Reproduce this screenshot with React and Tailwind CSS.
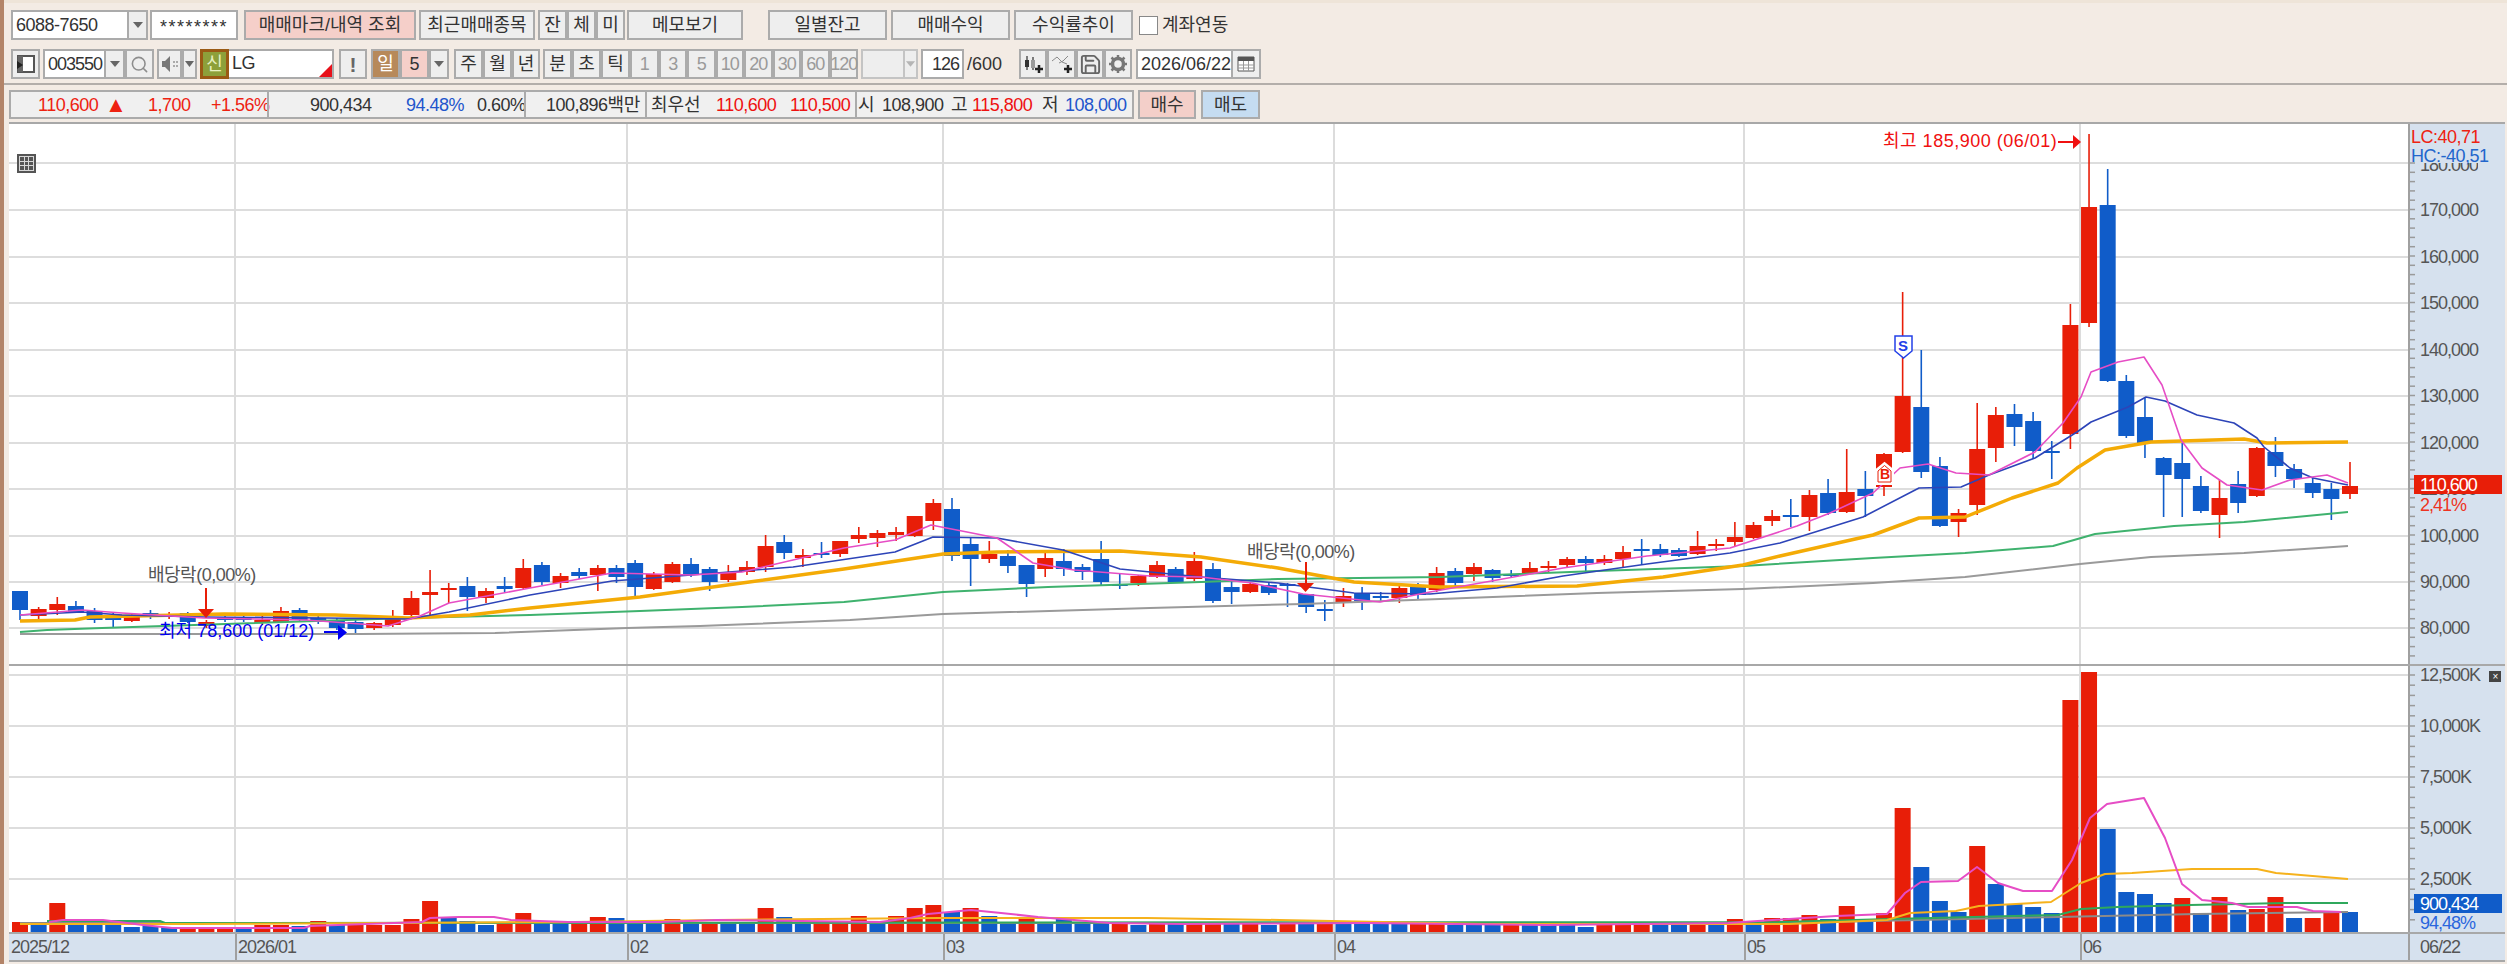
import { Search, Save } from 'lucide-react'

const RED = '#e81e08'
const BLUE = '#105cc9'

// [color, wick top, body top, body bottom, wick bottom] in page pixels
const candles = [
  ['b',591,591,610,620],['r',607,609,616,619],['r',597,604,610,615],['b',601,606,612,613],['b',608,611,620,623],
  ['b',613,616,620,627],['r',613,615,621,622],['b',610,613,617,619],['r',612,614,617,619],['b',612,613,622,623],
  ['r',620,622,626,628],['b',615,617,620,622],['b',616,618,620,622],['r',615,620,623,625],['r',607,611,622,623],
  ['b',608,610,620,622],['b',616,618,622,624],['b',618,620,628,630],['b',620,622,629,635],['r',622,623,628,630],
  ['r',610,617,625,627],['r',591,598,615,617],['r',570,592,595,617],['r',583,588,590,603],['b',577,586,597,611],
  ['r',588,591,598,603],['b',577,586,589,592],['r',559,568,588,589],['b',562,565,582,585],['r',573,576,583,588],
  ['b',568,572,576,579],['r',565,568,575,591],['b',565,568,577,583],['b',560,563,587,597],['r',572,574,589,590],
  ['r',562,564,582,583],['b',558,564,575,577],['b',567,569,582,591],['r',565,573,580,582],['r',561,567,572,575],
  ['r',535,546,567,572],['b',535,542,553,559],['r',549,555,558,567],['b',542,553,555,558],['r',541,541,554,557],
  ['r',527,535,539,543],['r',530,533,538,547],['r',527,532,535,541],['r',516,516,536,537],['r',499,503,521,530],
  ['b',498,509,556,561],['b',537,544,559,586],['r',541,554,559,563],['b',550,556,566,573],['b',565,565,584,597],
  ['r',553,558,569,577],['b',549,561,569,576],['b',564,567,572,580],['b',541,559,582,585],['b',574,584,586,589],
  ['r',575,576,583,586],['r',561,565,577,578],['b',567,569,582,583],['r',552,561,579,581],['b',563,569,601,603],
  ['b',580,587,592,604],['r',582,584,592,593],['b',583,585,593,595],['b',583,584,586,607],['b',594,594,607,613],
  ['b',600,609,610,621],['r',588,596,602,607],['b',587,593,601,610],['b',592,596,598,602],['r',583,588,598,603],
  ['b',583,585,595,600],['r',567,573,590,592],['b',568,571,583,586],['r',563,567,574,581],['b',569,570,578,582],
  ['b',570,574,575,578],['r',562,568,573,574],['r',561,566,567,572],['r',557,559,565,567],['b',556,559,563,572],
  ['r',555,559,563,565],['r',546,552,559,568],['b',539,549,551,564],['b',544,549,555,557],['b',548,550,556,557],
  ['r',531,546,554,555],['r',539,544,545,551],['r',522,537,542,547],['r',522,525,538,539],['r',510,516,521,526],
  ['b',499,515,517,527],['r',490,495,517,531],['b',479,493,513,515],['r',449,492,512,513],['b',471,489,496,517],
  ['r',453,454,487,496],['r',292,396,452,453],['b',350,407,472,478],['b',457,466,526,527],['r',509,513,522,537],
  ['r',403,449,505,515],['r',407,415,448,462],['b',404,414,427,446],['b',412,421,451,459],['b',441,451,453,479],
  ['r',304,325,434,449],['r',134,207,323,327],['b',169,205,381,382],['b',375,381,436,438],['b',397,417,443,458],
  ['b',457,458,475,517],['b',443,463,479,517],['b',476,486,511,513],['r',480,498,515,538],['b',471,484,503,513],
  ['r',447,448,496,497],['b',437,452,466,477],['b',464,469,479,488],['b',477,483,493,498],['b',483,489,499,520],
  ['r',462,486,494,499],
]

const volumes = [
  'r922','b925','r903','b922','b925','b925','b927','b926','b927','r927','r927','r927','b927','r925','r925','b926',
  'r921','b925','r925','r925','r925','r919','r901','b918','b921','b925','r923','r913','b922','b923','r923','r917',
  'b918','b923','b923','r919','b923','r923','b923','b923','r908','b917','b922','r923','r923','r916','b923','r916',
  'r908','r905','b912','r908','b916','b922','r917','b922','b919','b922','b923','r922','b925','r923','b924','r922',
  'r922','b922','r922','b925','r922','b923','r922','b922','b922','b924','b924','r924','r922','b925','b925','b925',
  'r922','b925','b925','b925','b927','r925','r925','r925','b925','b925','r922','b925','r919','b925','r918','r918',
  'r915','b919','r906','b919','r913','r808','b867','b901','b912','r846','b884','b904','b907','b913','r700','r672',
  'b829','b892','b894','b903','r898','b913','r897','b910','r909','r897','b918','r918','r912','b912',
]

const priceLines = [
  { color: '#9a9a9a', width: 2, d: '20,634 360,634 495,633 627,628 700,626 850,620 943,614 1150,608 1303,604 1440,599 1597,593 1743,589 1873,583 1965,577 2080,564 2151,557 2244,553 2348,546' },
  { color: '#3fb26e', width: 2, d: '20,632 47,630 102,628 347,620 408,618 530,615 640,611 742,607 844,602 943,592 1048,587 1201,582 1278,579 1440,577 1597,571 1743,566 1873,558 1965,553 2053,546 2095,534 2174,526 2244,522 2348,512' },
  { color: '#f4ab06', width: 3.5, d: '20,621 75,620 90,617 224,614 335,615 408,618 470,615 530,608 640,597 742,583 844,569 943,554 997,552 1120,551 1201,557 1278,568 1354,582 1440,587 1577,586 1663,577 1743,565 1780,556 1873,535 1919,518 1965,517 2012,498 2058,483 2077,468 2105,450 2151,442 2244,439 2267,443 2348,442' },
  { color: '#2d44b8', width: 1.6, d: '20,615 82,612 122,615 204,617 326,618 408,619 449,612 530,595 612,581 691,575 793,567 895,552 933,537 997,538 1063,550 1120,569 1201,577 1278,583 1354,593 1430,594 1497,588 1563,576 1647,564 1730,553 1780,543 1863,517 1919,488 1961,487 1989,475 2035,458 2077,432 2091,422 2128,407 2146,397 2165,401 2197,415 2234,423 2257,438 2264,447 2290,468 2313,478 2348,485' },
  { color: '#e64dc5', width: 1.6, d: '20,615 82,610 122,613 204,618 306,620 388,626 420,616 449,603 530,588 612,573 691,575 742,572 793,560 844,548 895,540 931,525 967,532 997,538 1033,563 1074,570 1150,576 1201,577 1252,583 1303,594 1380,602 1430,592 1497,580 1563,568 1647,556 1730,548 1797,526 1830,513 1873,493 1900,468 1928,464 1956,473 1989,475 2035,452 2063,423 2081,397 2091,372 2118,362 2144,357 2162,385 2181,440 2202,468 2227,485 2262,490 2290,480 2327,475 2348,483' },
]

const volumeLines = [
  { color: '#8a8a8a', width: 2, d: '20,923 1780,923 2058,917 2197,914 2348,912' },
  { color: '#2fa85c', width: 2, d: '47,921 160,921 165,923 1780,922 1891,919 2058,915 2081,909 2118,907 2190,905 2285,903 2348,903' },
  { color: '#f6b21c', width: 2, d: '20,924 195,924 574,922 717,920 940,918 1147,918 1280,920 1486,924 1789,924 1887,920 1910,913 1956,911 1979,906 2051,902 2081,883 2105,874 2132,873 2192,869 2257,869 2276,873 2348,879' },
  { color: '#e64dc5', width: 2, d: '49,922 63,920 103,920 143,925 172,928 304,928 310,926 422,922 430,918 459,917 494,917 511,920 568,922 660,922 717,920 880,922 910,918 928,914 971,910 1001,913 1038,917 1110,923 1183,924 1365,923 1547,925 1728,923 1789,919 1836,916 1887,914 1905,893 1921,882 1958,881 1977,867 1998,883 2023,891 2052,891 2072,860 2090,818 2107,804 2144,798 2165,838 2182,884 2202,900 2232,903 2248,907 2297,907 2313,911 2341,912' },
]

const monthX = [235, 627, 943, 1334, 1744, 2080]
const priceGrid = [163, 210, 257, 303, 350, 396, 443, 489, 536, 582, 628]
const volumeGrid = [675, 726, 777, 828, 879]
const priceLabels = [
  ['170,000', 210], ['160,000', 257], ['150,000', 303], ['140,000', 350], ['130,000', 396], ['120,000', 443],
  ['110,000', 489], ['100,000', 536], ['90,000', 582], ['80,000', 628],
]
const volumeLabels = [['12,500K', 675], ['10,000K', 726], ['7,500K', 777], ['5,000K', 828], ['2,500K', 879]]
const barX = (i) => 20 + i * 18.64

function Btn({ className = '', children }) {
  return (
    <button className={`flex h-full shrink-0 items-center justify-center border-2 border-[#ababab] bg-[#eeeeee] tracking-normal ${className}`}>
      {children}
    </button>
  )
}

function Arrow({ disabled }) {
  return (
    <svg width="12" height="8" viewBox="0 0 12 8">
      <path d="M1 1h10L6 7z" fill={disabled ? '#b5b5b5' : '#666'} />
    </svg>
  )
}

function PriceChart() {
  return (
    <svg className="block h-[540px] w-full" viewBox="9 124 2399 540" preserveAspectRatio="none">
      {priceGrid.map((y) => <line key={y} x1="9" x2="2408" y1={y} y2={y} stroke="#dddddd" strokeWidth="2" />)}
      {monthX.map((x) => <line key={x} x1={x} x2={x} y1="124" y2="664" stroke="#dcdcdc" strokeWidth="2" />)}
      {candles.map(([c, wt, bt, bb, wb], i) => {
        const color = c === 'r' ? RED : BLUE
        const x = barX(i)
        return (
          <g key={i}>
            <line x1={x} x2={x} y1={wt} y2={wb} stroke={color} strokeWidth="1.6" />
            <rect x={x - 8} y={bt} width="16" height={Math.max(bb - bt, 2)} fill={color} />
          </g>
        )
      })}
      {priceLines.map((l) => <polyline key={l.color} points={l.d} fill="none" stroke={l.color} strokeWidth={l.width} strokeLinejoin="round" />)}
      <path d="M206 588v22" stroke={RED} strokeWidth="2" />
      <path d="M198 609h16l-8 9z" fill={RED} />
      <path d="M1306 562v22" stroke={RED} strokeWidth="2" />
      <path d="M1297 583h17l-8.500 9z" fill={RED} />
      <path d="M324 632h16" stroke="#0000f0" strokeWidth="2" />
      <path d="M338 625l9 7.500-9 7.500z" fill="#0000f0" />
      <path d="M2058 142h16" stroke="#f01010" strokeWidth="2" />
      <path d="M2073 135l8 7-8 7z" fill="#f01010" />
      <path d="M1895 336h17v15l-8.500 7-8.500-7z" fill="#fff" stroke="#2340e8" strokeWidth="1.500" />
      <path d="M1876 484v-14l8.500-7 8.500 7v14z" fill="#fff" stroke="#fff" strokeWidth="2" />
      <path d="M1878 482v-11l6.500-5.500 6.500 5.500v11z" fill="#fff" stroke={RED} strokeWidth="1" />
    </svg>
  )
}

function VolumeChart() {
  return (
    <svg className="block h-[266px] w-full" viewBox="9 666 2399 266" preserveAspectRatio="none">
      {volumeGrid.map((y) => <line key={y} x1="9" x2="2408" y1={y} y2={y} stroke="#dddddd" strokeWidth="2" />)}
      {monthX.map((x) => <line key={x} x1={x} x2={x} y1="666" y2="932" stroke="#dcdcdc" strokeWidth="2" />)}
      {volumes.map((v, i) => {
        const top = Number(v.slice(1))
        return <rect key={i} x={barX(i) - 8} y={top} width="16" height={932 - top} fill={v[0] === 'r' ? RED : BLUE} />
      })}
      {volumeLines.map((l) => <polyline key={l.color} points={l.d} fill="none" stroke={l.color} strokeWidth={l.width} strokeLinejoin="round" />)}
    </svg>
  )
}

function AxisTicks({ from, to, step }) {
  const ticks = []
  for (let y = from; y < to; y += step) ticks.push(y)
  return (
    <svg className="absolute inset-0 h-full w-[10px]">
      {ticks.map((y) => <line key={y} x1="0" x2="5" y1={y} y2={y} stroke="#9a9a9a" strokeWidth="1.500" />)}
    </svg>
  )
}

export default function App() {
  return (
    <div className="flex h-[964px] w-[2507px] overflow-hidden bg-[#f3ebe4] font-['Liberation_Sans','Noto_Sans_CJK_KR',sans-serif] text-[18px] leading-none tracking-[-0.5px] text-[#333]">
      <div className="w-[4px] shrink-0 bg-[#b38468]" />
      <div className="flex min-w-0 flex-1 flex-col">
        <div className="h-[3px] shrink-0 bg-[#eee4d8]" />

        <div className="ml-[7px] mt-[7px] flex h-[30px] shrink-0 items-stretch">
          <div className="flex w-[116px] items-center border-2 border-r-0 border-[#ababab] bg-white pl-[3px]">6088-7650</div>
          <Btn className="w-[21px]"><Arrow /></Btn>
          <div className="ml-[2px] flex w-[88px] items-center justify-center border-2 border-[#ababab] bg-white pt-[3px] text-[18px] tracking-[1.5px]">********</div>
          <Btn className="ml-[6px] w-[172px] !bg-[#f5cfc9]">매매마크/내역 조회</Btn>
          <Btn className="ml-[3px] w-[116px]">최근매매종목</Btn>
          <Btn className="ml-[3px] w-[29px]">잔</Btn>
          <Btn className="w-[29px]">체</Btn>
          <Btn className="w-[29px]">미</Btn>
          <Btn className="ml-[2px] w-[116px]">메모보기</Btn>
          <Btn className="ml-[25px] w-[119px]">일별잔고</Btn>
          <Btn className="ml-[4px] w-[119px]">매매수익</Btn>
          <Btn className="ml-[4px] w-[119px]">수익률추이</Btn>
          <div className="ml-[6px] h-[19px] w-[19px] self-center border border-[#888] bg-white" />
          <span className="ml-[4px] self-center tracking-normal">계좌연동</span>
        </div>

        <div className="ml-[7px] mt-[9px] flex h-[30px] shrink-0 items-stretch">
          <Btn className="w-[29px]">
            <svg width="20" height="20" viewBox="0 0 20 20">
              <path d="M2 2h16v16H2z" fill="#fff" stroke="#555" strokeWidth="2" />
              <path d="M2 2h5v16H2z" fill="#666" />
              <path d="M1 7l6 4-6 4z" fill="#222" />
            </svg>
          </Btn>
          <div className="ml-[3px] flex w-[61px] items-center border-2 border-r-0 border-[#ababab] bg-white pl-[3px] tracking-[-1px]">003550</div>
          <Btn className="w-[21px]"><Arrow /></Btn>
          <Btn className="w-[29px]"><Search size={19} color="#8d8d8d" strokeWidth={2} /></Btn>
          <Btn className="ml-[3px] w-[25px]">
            <svg width="18" height="18" viewBox="0 0 18 18">
              <path d="M1 6h3l5-5v16l-5-5H1z" fill="#777" />
              <path d="M12 6h2v2h-2zM15 6h2v2h-2zM12 10h2v2h-2zM15 10h2v2h-2z" fill="#aaa" />
            </svg>
          </Btn>
          <Btn className="w-[15px]">
            <svg width="9" height="6" viewBox="0 0 9 6"><path d="M0 0h9L4.500 6z" fill="#666" /></svg>
          </Btn>
          <div className="ml-[3px] flex w-[29px] items-center justify-center border-[3px] border-[#9a5a14] bg-[#8da03a] tracking-normal text-[#e8f0c0]">신</div>
          <div className="relative flex w-[105px] items-center border-2 border-l-0 border-[#ababab] bg-white pb-[3px] pl-[3px]">
            LG
            <span className="absolute bottom-0 right-0 h-0 w-0 border-b-[13px] border-l-[13px] border-b-[#e8111a] border-l-transparent" />
          </div>
          <Btn className="ml-[5px] w-[28px] text-[21px] font-bold text-[#666]">!</Btn>
          <Btn className="ml-[4px] w-[29px] !bg-[#b7895a] text-white">일</Btn>
          <Btn className="w-[29px] !bg-[#f5cfc9]">5</Btn>
          <Btn className="w-[20px]"><Arrow /></Btn>
          <Btn className="ml-[5px] w-[29px]">주</Btn>
          <Btn className="w-[29px]">월</Btn>
          <Btn className="w-[28px]">년</Btn>
          <Btn className="ml-[3px] w-[29px]">분</Btn>
          <Btn className="w-[29px]">초</Btn>
          <Btn className="w-[29px]">틱</Btn>
          {['1', '3', '5', '10', '20', '30', '60', '120'].map((n) => (
            <Btn key={n} className="w-[28.500px] !tracking-[-1px] text-[#9a9a9a]">{n}</Btn>
          ))}
          <div className="ml-[3px] flex w-[42px] border-2 border-r-0 border-[#c4c4c4] bg-[#eeeeee]" />
          <Btn className="w-[15px] !border-[#c4c4c4]"><Arrow disabled /></Btn>
          <div className="ml-[3px] flex w-[43px] items-center justify-end border-2 border-[#ababab] bg-white pr-[3px] tracking-[-1px]">126</div>
          <span className="ml-[3px] w-[52px] self-center tracking-normal">/600</span>
          <Btn className="w-[28px]">
            <svg width="22" height="20" viewBox="0 0 22 20">
              <path d="M5 2v14M11 3v13" stroke="#555" strokeWidth="1.500" />
              <path d="M3 6h4v7H3z" fill="#333" />
              <path d="M9 6h4v8H9z" fill="#999" />
              <path d="M17 11v8M13 15h8" stroke="#222" strokeWidth="2.500" />
            </svg>
          </Btn>
          <Btn className="w-[29px]">
            <svg width="22" height="20" viewBox="0 0 22 20">
              <path d="M1 7l5-4 5 5 5 2M8 9l4-2 5-5" fill="none" stroke="#8a8a8a" strokeWidth="1" />
              <path d="M17 11v8M13 15h8" stroke="#222" strokeWidth="2.500" />
            </svg>
          </Btn>
          <Btn className="w-[28px]"><Save size={23} color="#666" strokeWidth={2} /></Btn>
          <Btn className="w-[28px]">
            <svg width="20" height="20" viewBox="0 0 20 20">
              <circle cx="10" cy="10" r="5.500" fill="none" stroke="#777" strokeWidth="3.500" />
              <path d="M10 1v4M10 15v4M1 10h4M15 10h4M3.500 3.500l3 3M13.500 13.500l3 3M3.500 16.500l3-3M13.500 6.500l3-3" stroke="#777" strokeWidth="2.500" />
            </svg>
          </Btn>
          <div className="ml-[4px] flex w-[95px] items-center border-2 border-r-0 border-[#ababab] bg-white pl-[3px] tracking-normal">2026/06/22</div>
          <Btn className="w-[30px]">
            <svg width="18" height="16" viewBox="0 0 18 16">
              <path d="M1 1h16v14H1z" fill="#fff" stroke="#555" />
              <path d="M1 1h16v4H1z" fill="#555" />
              <path d="M1 9h16M1 12h16M6.500 5v10M11.500 5v10" stroke="#999" />
            </svg>
          </Btn>
        </div>

        <div className="mt-[4px] h-[2px] shrink-0 bg-[#b3aeaa]" />

        <div className="ml-[5px] mt-[5px] flex h-[29px] shrink-0 items-stretch">
          <div className="flex w-[638px] items-center border-2 border-[#ababab] bg-[#f0f0f0] whitespace-nowrap">
            <span className="ml-[27px] w-[67px] text-[#ee2211]">110,600</span>
            <span className="w-[43px] text-[22px] text-[#ee2211]">▲</span>
            <span className="w-[63px] text-[#ee2211]">1,700</span>
            <span className="w-[56px] text-[#ee2211]">+1.56%</span>
            <span className="mr-[41px] h-full border-l-2 border-[#ababab]" />
            <span className="w-[96px]">900,434</span>
            <span className="w-[71px] text-[#2255cc]">94.48%</span>
            <span className="w-[47px]">0.60%</span>
            <span className="h-full border-l-2 border-[#ababab]" />
            <span className="ml-[20px]">100,896백만</span>
          </div>
          <div className="flex w-[210px] items-center border-2 border-l-0 border-[#ababab] bg-[#f0f0f0] pl-[4px]">
            <span className="w-[65px] tracking-normal">최우선</span>
            <span className="w-[74px] text-[#ee1111]">110,600</span>
            <span className="text-[#ee1111]">110,500</span>
          </div>
          <div className="flex w-[277px] items-center border-2 border-l-0 border-[#ababab] bg-[#f0f0f0] pl-[1px]">
            <span className="w-[24px] tracking-normal">시</span>
            <span className="w-[69px]">108,900</span>
            <span className="w-[21px] tracking-normal">고</span>
            <span className="w-[70px] text-[#ee1111]">115,800</span>
            <span className="w-[23px] tracking-normal">저</span>
            <span className="text-[#2255cc]">108,000</span>
          </div>
          <Btn className="ml-[4px] w-[58px] !bg-[#f3cfc9]">매수</Btn>
          <Btn className="ml-[5px] w-[59px] !bg-[#c5dcf1]">매도</Btn>
        </div>

        <div className="ml-[5px] mr-[2px] mt-[3px] flex flex-col border-y-2 border-[#a8a8a8] bg-white">
          <div className="flex h-[542px] border-b-2 border-[#a8a8a8]">
            <div className="relative w-[2399px] shrink-0">
              <PriceChart />
              <div className="absolute left-[8px] top-[30px] grid h-[19px] w-[19px] grid-cols-3 gap-[1px] border-2 border-[#555] bg-[#d8d8d8] p-[1px]">
                {Array.from({ length: 9 }).map((_, i) => <span key={i} className="bg-[#555]" />)}
              </div>
              <span className="absolute left-[139px] top-[442px] text-[#555]">배당락(0,00%)</span>
              <span className="absolute left-[1238px] top-[419px] text-[#555]">배당락(0,00%)</span>
              <span className="absolute left-[150px] top-[498px] tracking-normal text-[#0000f0]">최저 78,600 (01/12)</span>
              <span className="absolute left-[1874px] top-[8px] tracking-[0.5px] text-[#f01010]">최고 185,900 (06/01)</span>
              <span className="absolute left-[1889px] top-[214px] text-[15px] font-bold text-[#2340e8]">S</span>
              <span className="absolute left-[1871px] top-[343px] text-[14px] font-bold text-[#e81e08]">B</span>
            </div>
            <div className="relative flex-1 overflow-hidden border-l-2 border-[#a0a0a0] bg-[#d6e1ee] tracking-[-1px] text-[#555]">
              <AxisTicks from={39} to={540} step={9.3} />
              <div className="absolute left-[10px] top-[39px] h-[8px] overflow-hidden">
                <div className="-mt-[7px]">180,000</div>
              </div>
              {priceLabels.map(([t, y]) => (
                <span key={t} className="absolute left-[10px]" style={{ top: y - 133 }}>{t}</span>
              ))}
              <div className="absolute left-[1px] top-[4px] tracking-[-0.5px]">
                <div className="h-[19px] text-[#ee2211]">LC:40,71</div>
                <div className="text-[#2266cc]">HC:-40,51</div>
              </div>
              <div className="absolute left-[4px] top-[351px] flex h-[19px] w-[88px] items-center bg-[#e81e08] pl-[6px] text-white">110,600</div>
              <span className="absolute left-[10px] top-[372px] text-[#ee3322]">2,41%</span>
            </div>
          </div>

          <div className="flex h-[268px] border-b-2 border-[#a8a8a8]">
            <div className="w-[2399px] shrink-0"><VolumeChart /></div>
            <div className="relative flex-1 overflow-hidden border-l-2 border-[#a0a0a0] bg-[#d6e1ee] tracking-[-1px] text-[#555]">
              <AxisTicks from={9} to={262} step={10.2} />
              {volumeLabels.map(([t, y]) => (
                <span key={t} className="absolute left-[10px]" style={{ top: y - 675 }}>{t}</span>
              ))}
              <div className="absolute left-[79px] top-[5px] flex h-[11px] w-[12px] items-center justify-center bg-[#444] text-[10px] text-white">×</div>
              <div className="absolute left-[4px] top-[228px] flex h-[19px] w-[88px] items-center bg-[#105cc9] pl-[6px] text-white">900,434</div>
              <span className="absolute left-[10px] top-[248px] text-[#2a66dd]">94,48%</span>
            </div>
          </div>

          <div className="relative flex h-[26px] bg-[#d6e1ee] tracking-[-1px] text-[#555]">
            <span className="ml-[2px] self-center">2025/12</span>
            {[['2026/01', 226], ['02', 618], ['03', 934], ['04', 1325], ['05', 1735], ['06', 2071]].map(([t, x]) => (
              <span key={t} className="absolute bottom-0 top-0 flex items-center border-l-2 border-[#a0a0a0] pl-[1px]" style={{ left: x }}>{t}</span>
            ))}
            <span className="absolute bottom-0 left-[2399px] top-0 flex items-center border-l-2 border-[#a0a0a0] pl-[10px]">06/22</span>
          </div>
        </div>
      </div>
    </div>
  )
}
